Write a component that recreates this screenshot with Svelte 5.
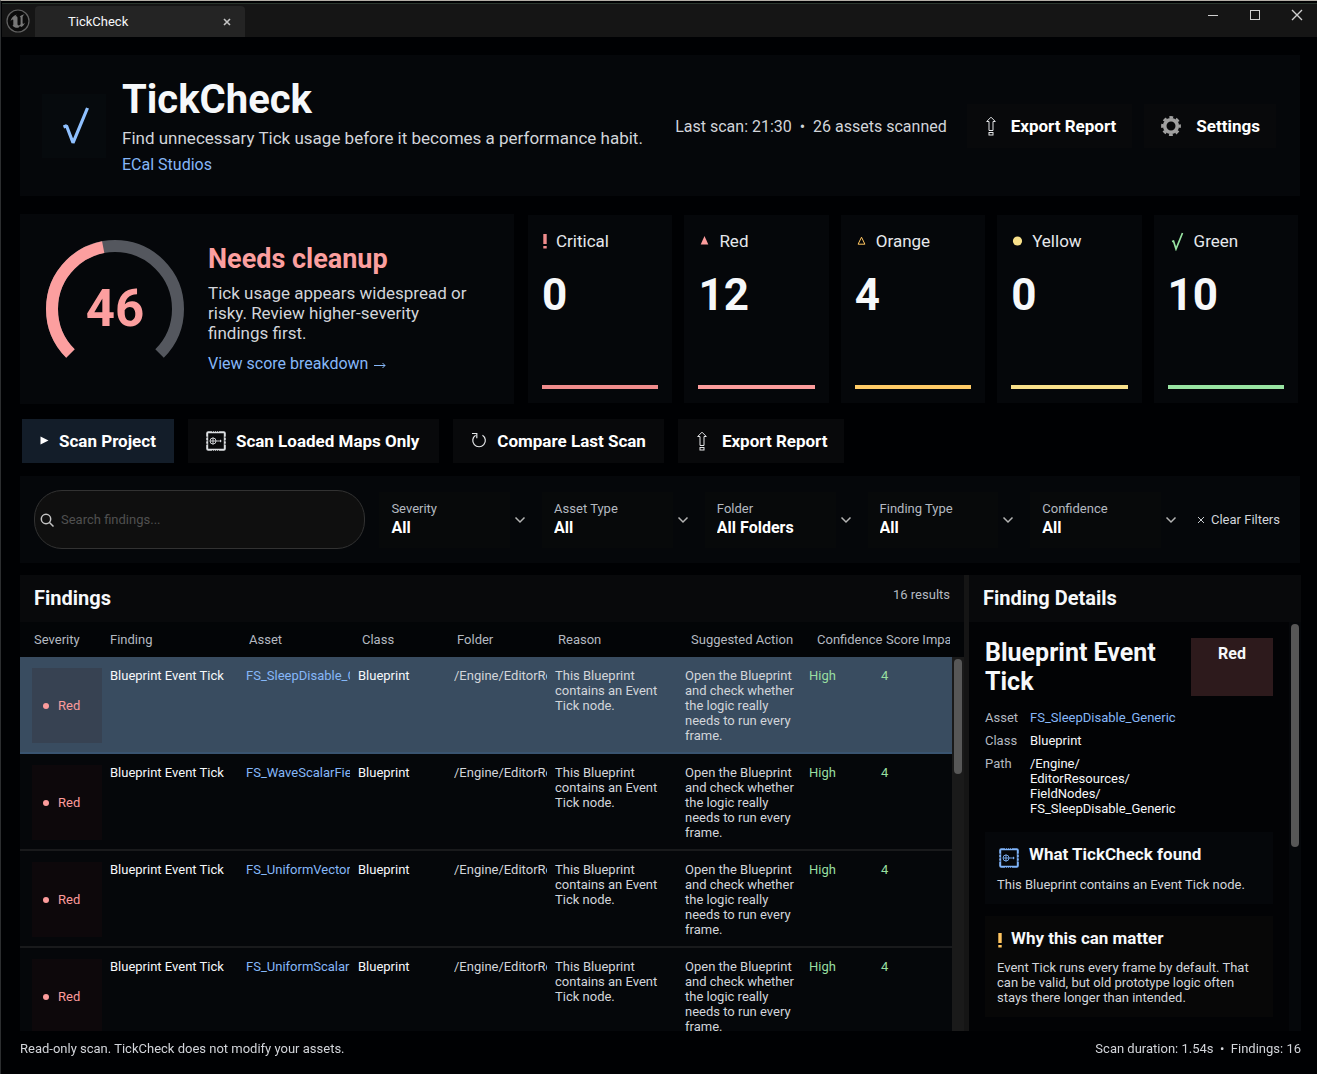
<script lang="ts">
  type Tone = "critical" | "red" | "orange" | "yellow" | "green";

  const score = 46;

  const counts: { label: string; tone: Tone; value: number }[] = [
    { label: "Critical", tone: "critical", value: 0 },
    { label: "Red", tone: "red", value: 12 },
    { label: "Orange", tone: "orange", value: 4 },
    { label: "Yellow", tone: "yellow", value: 0 },
    { label: "Green", tone: "green", value: 10 },
  ];

  const filters = [
    { id: "severity", label: "Severity", value: "All" },
    { id: "asset-type", label: "Asset Type", value: "All" },
    { id: "folder", label: "Folder", value: "All Folders" },
    { id: "finding-type", label: "Finding Type", value: "All" },
    { id: "confidence", label: "Confidence", value: "All" },
  ];

  const columns = [
    "Severity",
    "Finding",
    "Asset",
    "Class",
    "Folder",
    "Reason",
    "Suggested Action",
    "Confidence",
    "Score Impact",
  ];

  const assets = [
    "FS_SleepDisable_Generic",
    "FS_WaveScalarField",
    "FS_UniformVector",
    "FS_UniformScalar",
  ];

  let selected = $state(0);
  let query = $state("");
</script>

{#snippet exportIcon()}
  <svg class="icon" width="12" height="20" viewBox="0 0 12 20" fill="none" stroke="#e4e6e8" stroke-width="1">
    <path d="M6 1.200 L10.300 5.500 H8 V14.500 H4 V5.500 H1.700 Z" />
    <rect x="4" y="16.500" width="4" height="2.500" />
  </svg>
{/snippet}

{#snippet mapIcon(color: string)}
  <svg class="icon" width="20" height="20" viewBox="0 0 20 20" fill="none" stroke={color}>
    <rect x="1.200" y="1.200" width="17.600" height="17.600" rx="1" stroke-width="2" />
    <path d="M6 .5h8M6 19.500h8" stroke="#08090b" stroke-width="1" stroke-dasharray="1 1" opacity=".7" />
    <path d="M.8 5.500v9M19.200 5.500v9" stroke="#08090b" stroke-width="1.200" stroke-dasharray="1.500 2" opacity=".7" />
    <circle cx="7" cy="10" r="3" stroke-width=".9" />
    <path d="M7 6.500v7M4 10h11.500M14.500 8.800v2.400" stroke-width=".9" />
  </svg>
{/snippet}

{#snippet toneIcon(tone: Tone)}
  {#if tone === "critical"}
    <svg width="6" height="16" viewBox="0 0 6 16"><path d="M1.300 1h3.400v10H1.300zM1.300 13h3.400v2.500H1.300z" fill="#f08c8c" /></svg>
  {:else if tone === "red"}
    <svg width="13" height="16" viewBox="0 0 13 16"><path d="M6.500 3l3.800 8.500H2.700z" fill="#fc9c9c" /></svg>
  {:else if tone === "orange"}
    <svg width="13" height="16" viewBox="0 0 13 16"><path d="M6.500 4.200l3.400 7H3.100z" fill="none" stroke="#ffc560" /></svg>
  {:else if tone === "yellow"}
    <svg width="13" height="16" viewBox="0 0 13 16"><circle cx="6.500" cy="8" r="4.600" fill="#f8e08a" /></svg>
  {:else}
    <svg width="18" height="20" viewBox="0 0 18 20"><path d="M4 10.500l1.500-.5 2.500 8L14.500 2" fill="none" stroke="#98e4a2" stroke-width="1.700" /></svg>
  {/if}
{/snippet}

<div class="window">
  <header class="titlebar">
    <svg class="engine" width="24" height="24" viewBox="0 0 24 24">
      <circle cx="12" cy="12" r="11" fill="#0b0b0b" stroke="#626262" stroke-width="1.200" />
      <path
        d="M11 5.500C7.500 6.500 5 9 4.500 12.500c.9-1.300 1.700-2 2.300-1.900.4.100.5.500.5 1v4c0 .8-.4 1-.9.900 1.400 1.800 3.500 2.600 5.900 2.300l1.700-1.700 1.300 1c1.800-1.100 3-2.500 3.600-4.300-1 1-1.600 1.300-2 1-.3-.2-.3-.5-.3-1V8.500c0-1.400.8-2.500 2-3.300-2.300.4-4 1.300-5 2.600.7 0 1 .4 1 1.100v6.300c-.5.800-1.200 1.200-1.900 1.200-.8 0-1.200-.5-1.200-1.400V9c0-1.500-.9-1.900-2-1.600.4-.9.900-1.400 1.500-1.900z"
        fill="#777"
      />
    </svg>
    <div class="tab">
      <span>TickCheck</span>
      <button class="bare" aria-label="Close tab">
        <svg width="8" height="8" viewBox="0 0 8 8" stroke="#c4c4c4" stroke-width="1.600"><path d="M1 1l6 6M7 1l-6 6" /></svg>
      </button>
    </div>
    <div class="controls">
      <button class="bare" aria-label="Minimize">
        <svg width="12" height="12" viewBox="0 0 12 12" stroke="#d0d0d0"><path d="M1 6.500h10" /></svg>
      </button>
      <button class="bare" aria-label="Maximize">
        <svg width="12" height="12" viewBox="0 0 12 12" fill="none" stroke="#d0d0d0"><rect x="1.500" y="1.500" width="9" height="9" /></svg>
      </button>
      <button class="bare" aria-label="Close">
        <svg width="12" height="12" viewBox="0 0 12 12" stroke="#d0d0d0" stroke-width="1.400"><path d="M1 1l10 10M11 1L1 11" /></svg>
      </button>
    </div>
  </header>

  <main>
    <section class="hero panel">
      <div class="logo">
        <svg width="32" height="44" viewBox="0 0 32 44" fill="none" stroke="#8fc1ff" stroke-width="3.200">
          <path d="M5.500 23l3-1.200 6.500 17L29.500 4" stroke-linejoin="bevel" />
        </svg>
      </div>
      <div class="intro">
        <h1>TickCheck</h1>
        <p>Find unnecessary Tick usage before it becomes a performance habit.</p>
        <a href="#studio">ECal Studios</a>
      </div>
      <span class="last">Last scan: 21:30&nbsp; •&nbsp; 26 assets scanned</span>
      <div class="hero-actions">
        <button class="btn export">{@render exportIcon()}Export Report</button>
        <button class="btn settings">
          <svg class="icon" width="22" height="22" viewBox="0 0 22 22" fill="none" stroke="#a0a0a0">
            <circle cx="11" cy="11" r="6.300" stroke-width="3.600" />
            <circle cx="11" cy="11" r="8.700" stroke-width="2.400" stroke-dasharray="3.800 3.033" stroke-dashoffset="1.900" />
          </svg>
          Settings
        </button>
      </div>
    </section>

    <section class="summary">
      <div class="score panel">
        <div class="gauge">
          <svg width="140" height="140" viewBox="0 0 140 140" fill="none" stroke-width="12">
            <path d="M25.450 114.550A63 63 0 1 1 114.550 114.550" stroke="#54575e" />
            <path
              d="M25.450 114.550A63 63 0 1 1 114.550 114.550"
              stroke="#fc9f9f"
              pathLength="100"
              stroke-dasharray="{score} 100"
            />
          </svg>
          <strong>{score}</strong>
        </div>
        <div class="verdict">
          <h2>Needs cleanup</h2>
          <p>Tick usage appears widespread or risky. Review higher-severity findings first.</p>
          <a href="#breakdown">
            View score breakdown
            <svg width="13" height="9" viewBox="0 0 13 9" fill="none" stroke="currentColor"><path d="M0 5.500h11M8.500 3l2.500 2.500L8.500 8" /></svg>
          </a>
        </div>
      </div>
      <div class="counts">
        {#each counts as c}
          <div class="count panel {c.tone}">
            <span class="count-label">{@render toneIcon(c.tone)}{c.label}</span>
            <strong>{c.value}</strong>
            <i></i>
          </div>
        {/each}
      </div>
    </section>

    <nav class="toolbar">
      <button class="btn primary">
        <svg class="icon" width="9" height="10" viewBox="0 0 9 10"><path d="M.5 .5L8.500 4.500 .5 8.500z" fill="#fff" /></svg>
        Scan Project
      </button>
      <button class="btn maps">{@render mapIcon("#dcdfe2")}Scan Loaded Maps Only</button>
      <button class="btn">
        <svg class="icon" width="16" height="18" viewBox="0 0 16 18" fill="none" stroke="#e4e6e8" stroke-width="1.200">
          <path d="M11.500 3.200A6.300 6.300 0 1 1 4.600 3.200M1 1.500h4.800v4.800" />
        </svg>
        Compare Last Scan
      </button>
      <button class="btn export">{@render exportIcon()}Export Report</button>
    </nav>

    <section class="filters panel">
      <label class="search">
        <svg width="14" height="14" viewBox="0 0 14 14" fill="none" stroke="#c4c4c4" stroke-width="1.500">
          <circle cx="6" cy="6" r="4.700" /><path d="M9.500 9.500l4 4" />
        </svg>
        <input type="text" placeholder="Search findings..." aria-label="Search findings" bind:value={query} />
      </label>
      {#each filters as f}
        <div class="filter">
          <div class="filter-box">
            <label for={f.id}>{f.label}</label>
            <select id={f.id}><option>{f.value}</option></select>
          </div>
          <svg width="12" height="8" viewBox="0 0 12 8" fill="none" stroke="#b4b4b4" stroke-width="1.500"><path d="M1.500 1.500L6 6l4.500-4.500" /></svg>
        </div>
      {/each}
      <button class="bare clear">
        <svg width="8" height="8" viewBox="0 0 8 8" stroke="#c8ccd0"><path d="M1 1l6 6M7 1L1 7" /></svg>
        Clear Filters
      </button>
    </section>

    <section class="work">
      <div class="findings">
        <div class="pane-head">
          <h3>Findings</h3>
          <span>16 results</span>
        </div>
        <table>
          <thead>
            <tr>
              {#each columns as col}<th>{col}</th>{/each}
            </tr>
          </thead>
          <tbody>
            {#each assets as asset, i}
              <tr class:selected={i === selected} onclick={() => (selected = i)}>
                <td><span class="badge"><i></i>Red</span></td>
                <td>Blueprint Event Tick</td>
                <td class="clip blue">{asset}</td>
                <td>Blueprint</td>
                <td class="clip soft">/Engine/EditorResources</td>
                <td class="soft">This Blueprint contains an Event Tick node.</td>
                <td class="soft">Open the Blueprint and check whether the logic really needs to run every frame.</td>
                <td class="good">High</td>
                <td class="good">4</td>
              </tr>
            {/each}
          </tbody>
        </table>
        <div class="track list-track"><div class="thumb"></div></div>
      </div>

      <aside class="details">
        <div class="pane-head"><h3>Finding Details</h3></div>
        <div class="details-body">
          <div class="details-scroll">
            <div class="subject">
              <h2>Blueprint Event Tick</h2>
              <span>Red</span>
            </div>
            <dl>
              <dt>Asset</dt>
              <dd class="blue">FS_SleepDisable_Generic</dd>
              <dt>Class</dt>
              <dd>Blueprint</dd>
              <dt>Path</dt>
              <dd>/Engine/<wbr />EditorResources/<wbr />FieldNodes/<wbr />FS_SleepDisable_Generic</dd>
            </dl>
            <article class="note">
              <h4>{@render mapIcon("#7fb4fa")}What TickCheck found</h4>
              <p>This Blueprint contains an Event Tick node.</p>
            </article>
            <article class="note warn">
              <h4>
                <svg width="6" height="16" viewBox="0 0 6 16"><path d="M1.300 1h3.400v10H1.300zM1.300 13h3.400v2.500H1.300z" fill="#ffc560" /></svg>
                Why this can matter
              </h4>
              <p>Event Tick runs every frame by default. That can be valid, but old prototype logic often stays there longer than intended.</p>
            </article>
          </div>
          <div class="track"><div class="thumb"></div></div>
        </div>
      </aside>
    </section>

    <footer>
      <span>Read-only scan. TickCheck does not modify your assets.</span>
      <span>Scan duration: 1.54s&nbsp; •&nbsp; Findings: 16</span>
    </footer>
  </main>
</div>

<style>
  :global(body) {
    background: #000103;
  }
  .window {
    --text: #f6f8fa;
    --soft: #d2d5da;
    --muted: #b4b9c0;
    --blue: #86b7f8;
    --panel: #05070a;
    --raised: #08090b;
    box-sizing: border-box;
    display: flex;
    flex-direction: column;
    height: 100vh;
    padding-left: 1px;
    border-top: 1px solid #b3aea6;
    border-left: 1px solid #2c2e30;
    background: #000103;
    color: var(--text);
    font: 13px/15px Roboto, "Noto Sans", sans-serif;
    overflow: hidden;
  }
  h1, h2, h3, h4, p, dl, dd {
    margin: 0;
  }
  a {
    color: var(--blue);
    font-size: 16px;
    line-height: 20px;
    text-decoration: none;
  }
  svg {
    display: block;
    flex: none;
  }
  button, input, select {
    font: inherit;
    color: inherit;
  }
  .bare {
    display: flex;
    align-items: center;
    justify-content: center;
    padding: 0;
    border: 0;
    background: none;
    cursor: pointer;
  }
  .blue {
    color: var(--blue);
  }
  .panel {
    background: var(--panel);
  }

  .titlebar {
    display: flex;
    align-items: stretch;
    flex: none;
    height: 33px;
    margin-top: 2px;
    padding-left: 4px;
    border-top: 1px solid #2b362e;
    background: #151515;
  }
  .engine {
    align-self: center;
  }
  .tab {
    display: flex;
    align-items: center;
    justify-content: space-between;
    box-sizing: border-box;
    width: 210px;
    margin: 2px 0 0 5px;
    padding: 0 14px 0 33px;
    border-radius: 4px 4px 0 0;
    background: #242424;
  }
  .controls {
    display: flex;
    align-items: flex-start;
    gap: 30px;
    margin-left: auto;
    padding: 5px 14px 0 0;
  }

  main {
    display: flex;
    flex: 1;
    flex-direction: column;
    min-height: 0;
    padding: 18px 16px 0 18px;
  }

  .hero {
    display: flex;
    align-items: center;
    flex: none;
    margin-right: 1px;
    padding: 22px 24px 21px 22px;
  }
  .logo {
    display: flex;
    align-items: center;
    justify-content: center;
    width: 64px;
    height: 64px;
    margin-right: 16px;
    background: #060a0d;
  }
  .intro {
    flex: 1;
  }
  .intro h1 {
    font-size: 40px;
    line-height: 46px;
  }
  .intro p {
    margin: 5px 0 7px;
    color: var(--soft);
    font-size: 17px;
    line-height: 20px;
  }
  .intro a {
    display: block;
  }
  .last {
    margin-right: 20px;
    color: var(--soft);
    font-size: 16px;
    white-space: nowrap;
  }
  .hero-actions {
    display: flex;
    gap: 12px;
  }
  .btn {
    display: flex;
    align-items: center;
    gap: 10px;
    height: 44px;
    padding: 0 18px;
    border: 0;
    background: var(--raised);
    color: #fff;
    font-size: 17px;
    font-weight: 700;
    white-space: nowrap;
    cursor: pointer;
  }
  .primary {
    background: #131d29;
  }
  .export {
    gap: 14px;
    padding-right: 16px;
  }
  .settings {
    gap: 14px;
    padding: 0 16px;
  }
  .maps {
    padding-right: 20px;
  }

  .summary {
    display: grid;
    grid-template-columns: minmax(0, 494fr) minmax(0, 770fr);
    flex: none;
    gap: 14px;
    margin-top: 18px;
    padding-right: 3px;
  }
  .score {
    display: flex;
    padding: 25px 32px 25px 25px;
  }
  .gauge {
    display: grid;
    place-items: center;
    width: 140px;
    height: 140px;
    margin-right: 23px;
  }
  .gauge > * {
    grid-area: 1 / 1;
  }
  .gauge strong {
    color: #fc9f9f;
    font-size: 51px;
    line-height: 60px;
  }
  .verdict {
    flex: 1;
  }
  .verdict h2 {
    margin: 4px 0 7px;
    color: #fc9f9f;
    font-size: 27px;
    line-height: 33px;
  }
  .verdict p {
    margin-bottom: 11px;
    color: var(--soft);
    font-size: 17px;
    line-height: 20px;
  }
  .verdict a {
    display: flex;
    align-items: center;
    gap: 6px;
  }
  .counts {
    display: grid;
    grid-template-columns: repeat(5, minmax(0, 1fr));
    gap: 12px;
    padding: 1px 0;
  }
  .count {
    display: flex;
    flex-direction: column;
    padding: 16px 14px 14px;
  }
  .count-label {
    display: flex;
    align-items: center;
    gap: 8px;
    height: 20px;
    color: #e6e8ec;
    font-size: 17px;
  }
  .count strong {
    margin-top: 18px;
    font-size: 44px;
    line-height: 52px;
  }
  .count i {
    height: 4px;
    margin-top: auto;
    background: #f08c8c;
  }
  .red i {
    background: #fc9c9c;
  }
  .orange i {
    background: #ffcb66;
  }
  .yellow i {
    background: #f8e08a;
  }
  .green i {
    background: #98e4a2;
  }

  .toolbar {
    display: flex;
    flex: none;
    gap: 14px;
    margin: 15px 2px 13px;
  }

  .filters {
    display: grid;
    grid-template-columns: minmax(0, 346fr) repeat(5, minmax(0, 163fr)) auto;
    align-items: center;
    flex: none;
    margin-right: 1px;
    padding: 14px 20px 14px 14px;
  }
  .search {
    display: flex;
    align-items: center;
    gap: 5px;
    box-sizing: border-box;
    height: 59px;
    margin-right: 14px;
    padding-left: 5px;
    border: 1px solid #323232;
    border-radius: 28px;
    background: #0f0f0f;
  }
  .search input {
    flex: 1;
    min-width: 0;
    border: 0;
    outline: 0;
    background: none;
  }
  .search input::placeholder {
    color: #505050;
    opacity: 1;
  }
  .filter {
    display: flex;
    align-items: center;
    gap: 4px;
  }
  .filter-box {
    display: flex;
    flex-direction: column;
    box-sizing: border-box;
    flex: 1;
    min-width: 0;
    height: 56px;
    padding: 9px 0 0 12px;
    background: #07090a;
    color: var(--muted);
  }
  .filter svg {
    margin-right: 16px;
  }
  .filter select {
    height: 20px;
    margin-top: 2px;
    padding: 0;
    border: 0;
    appearance: none;
    background: none;
    color: #fff;
    font-size: 16px;
    font-weight: 700;
  }
  .clear {
    gap: 6px;
    margin-left: 4px;
    color: var(--soft);
    white-space: nowrap;
  }

  .work {
    display: flex;
    flex: 1;
    min-height: 0;
    margin-top: 12px;
  }
  .findings {
    display: grid;
    grid-template: auto minmax(0, 1fr) / minmax(0, 1fr);
    flex: 944 1 0;
    min-width: 0;
    border-right: 5px solid #151515;
    background: #030507;
  }
  .pane-head {
    display: flex;
    justify-content: space-between;
    flex: none;
    height: 47px;
    padding: 0 14px;
    background: var(--raised);
  }
  .pane-head h3 {
    font-size: 20px;
    line-height: 46px;
  }
  .pane-head span {
    color: var(--muted);
    line-height: 40px;
  }
  table {
    display: flex;
    flex-direction: column;
    grid-area: 2 / 1;
    min-height: 0;
  }
  thead, tbody {
    display: block;
  }
  tr {
    display: grid;
  }
  thead tr {
    grid-template-columns: 76fr 139fr 113fr 95fr 101fr 133fr 126fr 69fr 64fr;
    padding: 0 14px;
  }
  th {
    min-width: 0;
    padding: 0;
    overflow: hidden;
    color: var(--muted);
    font-weight: 400;
    line-height: 35px;
    text-align: left;
    white-space: nowrap;
  }
  tbody {
    flex: 1;
    min-height: 0;
    margin-right: 12px;
    overflow-y: auto;
    scrollbar-width: none;
    background: var(--panel);
  }
  tbody tr {
    grid-template-columns: 78fr 136fr 112fr 96fr 101fr 130fr 124fr 72fr 71fr;
    padding: 11px 0 9px 12px;
    border-bottom: 2px solid #191a1c;
  }
  tbody tr.selected {
    border-bottom-color: #3a5470;
    background: #394c60;
  }
  td {
    min-width: 0;
    padding: 0 8px 0 0;
  }
  .soft {
    color: var(--soft);
  }
  .good {
    color: #98dfa0;
  }
  .clip {
    margin-right: 8px;
    padding: 0;
    overflow: hidden;
    white-space: nowrap;
  }
  .badge {
    display: flex;
    align-items: center;
    gap: 9px;
    box-sizing: border-box;
    height: 75px;
    padding-left: 11px;
    background: #0d080b;
    color: #fc9c9c;
  }
  .selected .badge {
    background: #374252;
  }
  .badge i {
    width: 6px;
    height: 6px;
    border-radius: 50%;
    background: currentColor;
  }
  .track {
    box-sizing: border-box;
    width: 12px;
    padding: 2px;
    background: #05070a;
  }
  .thumb {
    height: 55%;
    border-radius: 4px;
    background: #575757;
  }
  .list-track {
    grid-area: 2 / 1;
    justify-self: end;
    margin-top: 35px;
    background: #1a1a1a;
  }
  .list-track .thumb {
    height: 31%;
  }

  .details {
    display: flex;
    flex-direction: column;
    flex: 332 1 0;
    min-width: 0;
    background: #020305;
  }
  .details-body {
    display: flex;
    flex: 1;
    min-height: 0;
  }
  .details-scroll {
    flex: 1;
    padding: 16px;
    overflow-y: auto;
    scrollbar-width: none;
  }
  .subject {
    display: flex;
    justify-content: space-between;
    margin-bottom: 14px;
  }
  .subject h2 {
    width: 190px;
    font-size: 25px;
    line-height: 29px;
  }
  .subject span {
    width: 82px;
    background: #2d1a1c;
    font-size: 16px;
    font-weight: 700;
    line-height: 32px;
    text-align: center;
  }
  dl {
    display: grid;
    grid-template-columns: 37px 148px;
    gap: 8px;
  }
  dt {
    color: var(--muted);
  }
  .note {
    margin-top: 16px;
    padding: 12px;
    background: var(--panel);
  }
  .note + .note {
    margin-top: 12px;
  }
  .note h4 {
    display: flex;
    gap: 10px;
    font-size: 17px;
    line-height: 20px;
  }
  .note h4 :global(svg) {
    margin: 4px 0 0 2px;
  }
  .note p {
    margin-top: 9px;
    color: var(--soft);
  }
  .warn {
    background: #070707;
  }
  .warn h4 {
    gap: 8px;
  }
  .warn h4 :global(svg) {
    margin-left: 0;
  }
  .warn p {
    margin-top: 12px;
  }

  footer {
    display: flex;
    justify-content: space-between;
    flex: none;
    padding: 10px 0 18px;
    color: var(--soft);
  }
</style>
